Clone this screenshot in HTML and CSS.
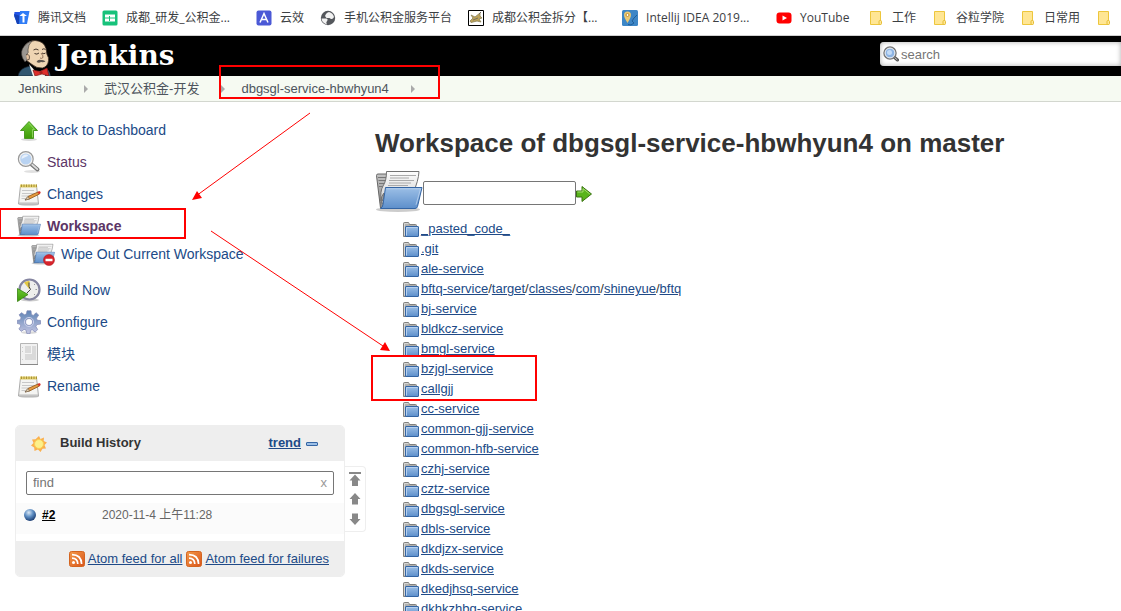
FILE: index.html
```html
<!DOCTYPE html>
<html lang="zh-CN">
<head>
<meta charset="utf-8">
<title>Workspace of dbgsgl-service-hbwhyun4 on master [Jenkins]</title>
<link rel="stylesheet" href="styles.css">
</head>
<body>
<svg class="sprite" aria-hidden="true">
  <defs>
    <linearGradient id="g-blue" x1="0" y1="0" x2="0" y2="1"><stop offset="0" stop-color="#9cbfe6"/><stop offset="1" stop-color="#5d8fcb"/></linearGradient>
    <linearGradient id="g-grey" x1="0" y1="0" x2="0" y2="1"><stop offset="0" stop-color="#c4c4c4"/><stop offset="1" stop-color="#8a8a8a"/></linearGradient>
    <linearGradient id="g-paper" x1="0" y1="0" x2="0" y2="1"><stop offset="0" stop-color="#fdfdfd"/><stop offset="1" stop-color="#cfcfcf"/></linearGradient>
    <linearGradient id="g-green" x1="0" y1="0" x2="0" y2="1"><stop offset="0" stop-color="#6cc935"/><stop offset="1" stop-color="#3e9a06"/></linearGradient>
    <linearGradient id="g-gear" x1="0" y1="0" x2="0" y2="1"><stop offset="0" stop-color="#5f84b5"/><stop offset="1" stop-color="#c3c5e2"/></linearGradient>
    <radialGradient id="g-ball" cx=".4" cy=".3" r=".7"><stop offset="0" stop-color="#dbe8f5"/><stop offset=".5" stop-color="#5f8fc4"/><stop offset="1" stop-color="#1d3f74"/></radialGradient>
    <linearGradient id="g-rss" x1="0" y1="0" x2="1" y2="1"><stop offset="0" stop-color="#f39a4a"/><stop offset="1" stop-color="#d9541a"/></linearGradient>
  </defs>
  <symbol id="i-folder" viewBox="0 0 16 16">
    <path d="M.5 14.500V1.500q0-1 1-1h4l1 2h6q1 0 1 1v11z" fill="#b0b0ae" stroke="#80807e"/>
    <path d="M1.500 13.500V1.500h4" fill="none" stroke="#d5d5d3"/>
    <rect x="2.500" y="4.500" width="13" height="10" rx=".5" fill="url(#g-blue)" stroke="#3465a4"/>
    <path d="M3.500 13.500v-8h11" fill="none" stroke="#b6d0ee"/>
  </symbol>
  <symbol id="i-open" viewBox="0 0 48 48">
    <ellipse cx="23" cy="42.500" rx="22" ry="2.500" fill="#000" opacity=".2"/>
    <path d="M1.500 8.500q0-1.500 1.500-1.500h12v34H5.500z" fill="url(#g-grey)" stroke="#666"/>
    <path d="M3 10.500h8M3.500 13.500h7M4 16.500h6M4 19.500h5" stroke="#777"/>
    <path d="M11.500 4.500h32.500Q43.500 14 38 26L32 36H6q4-5 3-10-3 3-3 8-1-10 2-15 3.500-5 3.500-14.500z" fill="url(#g-paper)" stroke="#727272"/>
    <path d="M15 8.500h26M15 11h19M14 13.500h25M14 16h22M13 18.500h20" stroke="#aaa"/>
    <path d="M10.500 20.500h36.500L42.500 39.500q-.5 2-2.500 2H5.500q2-1 2.500-4z" fill="url(#g-blue)" stroke="#3465a4" stroke-linejoin="round"/>
    <path d="M11.500 21.800h34l-4.500 16" fill="none" stroke="#bad2ef" opacity=".8"/>
  </symbol>
  <symbol id="i-up" viewBox="0 0 24 24">
    <ellipse cx="12" cy="21.500" rx="8" ry="1.500" fill="#000" opacity=".15"/>
    <path d="M12 3.500L20.500 12.500H16.500V20.500H7.500V12.500H3.500z" fill="url(#g-green)" stroke="#4a9a22"/>
    <path d="M12 5.200L17.500 11.500H15.500V19.500" fill="none" stroke="#a5e277" opacity=".7"/>
  </symbol>
  <symbol id="i-search" viewBox="0 0 24 24">
    <ellipse cx="15" cy="21.500" rx="8" ry="1.500" fill="#000" opacity=".12"/>
    <path d="M14 14l6.500 5.500" stroke="#777" stroke-width="4" stroke-linecap="round"/>
    <path d="M15 14.500l5.300 4.600" stroke="#ddd" stroke-width="1.800" stroke-linecap="round"/>
    <circle cx="8.800" cy="9" r="7" fill="#b9d3f2" stroke="#999" stroke-width="2"/>
    <circle cx="8.800" cy="9" r="6.200" fill="none" stroke="#f5f5f5" stroke-width="1.200"/>
    <path d="M4.500 9q0-4.500 5-4.500 3.500 1-1 2.500Q5.500 8.500 4.500 9z" fill="#e8f1fc"/>
  </symbol>
  <symbol id="i-find" viewBox="0 0 16 16">
    <path d="M11 11l3.500 3" stroke="#555" stroke-width="3" stroke-linecap="round"/>
    <path d="M11 11l3 2.600" stroke="#ccc" stroke-linecap="round"/>
    <circle cx="7" cy="7" r="6" fill="#8db4e4" stroke="#777" stroke-width="1.500"/>
    <circle cx="7" cy="7" r="4.900" fill="none" stroke="#f0f0f0"/>
    <circle cx="6.500" cy="6.500" r="2.500" fill="#c3dbf6"/>
  </symbol>
  <symbol id="i-note" viewBox="0 0 24 24">
    <ellipse cx="12" cy="22.500" rx="10" ry="1.300" fill="#000" opacity=".2"/>
    <path d="M3.500 3.500h16l2 18.500H1.500z" fill="#f4f4f2" stroke="#aaa"/>
    <path d="M2 21h19" stroke="#bbb"/>
    <path d="M3 2.500h17v3H3z" fill="#e2cf6b"/>
    <path d="M4.500 2.500v2.500M7 2.500v2.500M9.500 2.500v2.500M12 2.500v2.500M14.500 2.500v2.500M17 2.500v2.500M19.500 2.500v2.500" stroke="#a8923a"/>
    <path d="M5 8.500h12M5 11.500h13M4.500 14h9M4.500 16.500h4" stroke="#c8c8c8"/>
    <path d="M8 18l3-3.500 10-4.500 1.500 2L12.500 17z" fill="#e59a40" stroke="#8c5417" stroke-width=".8"/>
    <path d="M8 18l3-3.500 1.500 2.500z" fill="#ead2ad" stroke="#555" stroke-width=".5"/>
    <path d="M20.500 10.200l1.500-1.200q2 .5 1.700 2l-1.500 1.200z" fill="#d6332a"/>
  </symbol>
  <symbol id="i-build" viewBox="0 0 24 24">
    <ellipse cx="13" cy="22" rx="9" ry="1.500" fill="#000" opacity=".2"/>
    <circle cx="12.500" cy="11.500" r="10" fill="#eeeeec" stroke="#8585a0" stroke-width="2.200"/>
    <path d="M12.500 11.500L7 4.500q3-2 5.500-1.500z" fill="#e4c843"/>
    <path d="M12 4.500v4l1.500 3-3.500 3.500" fill="none" stroke="#444"/>
    <path d="M20 11.500h-1.500M18 6l-1 1M18 17l-1-1" stroke="#999"/>
    <path d="M.5 10.500l10.500 6-10.500 7z" fill="url(#g-green)" stroke="#378211" stroke-width=".8"/>
  </symbol>
  <symbol id="i-gear" viewBox="0 0 24 24">
    <ellipse cx="12" cy="22.500" rx="8" ry="1.300" fill="#000" opacity=".15"/>
    <path d="M10 .8h4l.4 3.700 2 .9 2.600-2.700 2.700 2.400-2.200 3.100.8 2.100 3.200.2v3.600l-3.700.5-.9 2 1.800 3-2.600 2.400-2.900-2.300-1.700.7-.4 3.300H9.900l-.8-3.500-2-.8-2.900 2-2.300-2.500L3.900 16l-.9-1.900-2.700-.6V10.300l2.900-.4.9-2.100-2-3 2.500-2.100 2.800 2.100 2-.8zM12 8.500a3.500 3.500 0 1 0 .1 0z" fill="url(#g-gear)" fill-rule="evenodd" stroke="#7f87b5" stroke-width=".7"/>
    <circle cx="12" cy="12" r="4.600" fill="none" stroke="#c9d0ea"/>
  </symbol>
  <symbol id="i-doc" viewBox="0 0 24 24">
    <path d="M3.500 1.500h17v21h-17z" fill="#f1f1f1" stroke="#b5b5b5"/>
    <path d="M3 22.500h18" stroke="#888"/>
    <path d="M8 4h11v14H8z" fill="#dadada"/>
    <path d="M8 11.500h6M14.500 4v8" stroke="#f4f4f4"/>
    <path d="M5.500 5v1M5.500 9v1M5.500 17v1" stroke="#ccc"/>
  </symbol>
  <symbol id="i-rss" viewBox="0 0 16 16">
    <rect x=".5" y=".5" width="15" height="15" rx="2" fill="url(#g-rss)" stroke="#d4641f"/>
    <circle cx="4.500" cy="11.500" r="1.500" fill="#fff"/>
    <path d="M3 7.200q5.500 0 5.800 5.800M3 3.600q9.300 0 9.600 9.400" fill="none" stroke="#fff" stroke-width="1.700"/>
  </symbol>
  <symbol id="i-mark" viewBox="0 0 16 16">
    <path d="M2.500 1.500h10v13h-10z" fill="#ffe694" stroke="#edc63c"/>
    <rect x="11" y="10.500" width="2.500" height="4" rx="1" fill="#ffe694" stroke="#e5bd35"/>
  </symbol>
  <symbol id="i-arrow" viewBox="0 0 16 16">
    <path d="M.5 5h5.500V.5L15.500 8 6 15.500V11H.5z" fill="#59b41c" stroke="#3a7411"/>
    <path d="M1.500 6h5.500V2.600L13.800 8" fill="none" stroke="#a4dc70"/>
  </symbol>
</svg>

<nav class="bookmarks" aria-label="Bookmarks">
  <a class="bookmark" href="#"><svg class="icon16" viewBox="0 0 16 16"><path d="M.5 2h8v11.500H3L0 6z" fill="#2254e8"/><path d="M0 4l5 1.500 1 8.500H3z" fill="#1642b5"/><path d="M6 1h9.500l-2.500 13H5z" fill="#2f7cf6"/><path d="M5.500 6l3.500-3 4 3h-2.500v6.500h-2V6z" fill="#fff"/></svg><span>腾讯文档</span></a>
  <a class="bookmark bookmark-long" href="#"><svg class="icon16" viewBox="0 0 16 16"><rect x=".5" y=".5" width="15" height="15" rx="1.500" fill="#17c27b"/><path d="M3 4.500h10v7H3z" fill="#fff"/><path d="M3 8h10M7.500 6v5" stroke="#17c27b"/></svg><span>成都_研发_公积金...</span></a>
  <a class="bookmark" href="#"><svg class="icon16" viewBox="0 0 16 16"><rect x=".5" y=".5" width="15" height="15" rx="2" fill="#4b59d6"/><path d="M4 12.500l4-9 4 9M5.500 9.500h5" fill="none" stroke="#fff" stroke-width="1.500"/></svg><span>云效</span></a>
  <a class="bookmark" href="#"><svg class="icon16" viewBox="0 0 16 16"><circle cx="8" cy="8" r="7.200" fill="#54575c"/><path d="M1.500 8.500h5q2 1 .5 2.500t0 3.500Q2 13 1.500 8.500zM6 4q1-1.500 3-2 4 1 5 5-1 2.500-3 2L9.500 8H6.500L5 6z" fill="#f2f2f2"/></svg><span>手机公积金服务平台</span></a>
  <a class="bookmark bookmark-long" href="#"><svg class="icon16" viewBox="0 0 16 16"><path d="M.5.500h15v15H.5z" fill="#fff" stroke="#000"/><path d="M2 11l3-3-2-3 4 2 5-4v3l2 2-3 1 2 3-4-1-6 1.500z" fill="#bda45c" stroke="#8c8158" stroke-width=".8"/><path d="M11 4l2-2M5 10l5-2" stroke="#777165"/></svg><span>成都公积金拆分【...</span></a>
  <a class="bookmark bookmark-long" href="#"><svg class="icon16" viewBox="0 0 16 16"><rect width="16" height="16" rx="1.500" fill="#3d86c6"/><path d="M6 14.500l3 .5 3-2-2-2 2-3 3-3" fill="none" stroke="#1f5d98"/><path d="M5.500 13Q2 7.500 2 5a3.500 3.500 0 0 1 7 0q0 2.500-3.500 8z" fill="#eac873"/><circle cx="5.500" cy="5" r="1.500" fill="#fff" stroke="#bd8f30"/></svg><span>Intellij IDEA 2019...</span></a>
  <a class="bookmark bookmark-mid" href="#"><svg class="icon16" viewBox="0 0 16 16"><rect x=".5" y="2.500" width="15" height="11" rx="3" fill="#f00"/><path d="M6.500 5.500v5L11 8z" fill="#fff"/></svg><span>YouTube</span></a>
  <a class="bookmark" href="#"><svg class="icon16"><use href="#i-mark"/></svg><span>工作</span></a>
  <a class="bookmark" href="#"><svg class="icon16"><use href="#i-mark"/></svg><span>谷粒学院</span></a>
  <a class="bookmark" href="#"><svg class="icon16"><use href="#i-mark"/></svg><span>日常用</span></a>
  <a class="bookmark" href="#" aria-label="More"><svg class="icon16"><use href="#i-mark"/></svg></a>
</nav>

<header class="header">
  <a class="logo" href="#">
    <svg class="butler" viewBox="0 0 36 38">
      <path d="M0 38q1-6 7-8.500l5-1.500 10 10z" fill="#31566f" stroke="#16232f" stroke-width=".7"/>
      <path d="M29 31q3 2 3.500 7H27z" fill="#31566f"/>
      <path d="M11 26l7 8 9-2v6H15z" fill="#f4f1ec"/>
      <path d="M5 16Q5 3 17 2.500q9 .5 11 8 .5 3 1 6 2 3 1.500 6-.5 6-6 7.500-6 .5-10.500-3.500L8 22Q5 20 5 16z" fill="#efd5b3" stroke="#3b2c22" stroke-width=".8"/>
      <path d="M4.500 20Q2 13 6 8.500 9 4 14 3 10 7 10 12q1 3-1.500 4.500L9 22 7 24z" fill="#9b9690" stroke="#3e3935" stroke-width=".6"/>
      <path d="M8 17q3-1.500 3.500 2t-2.500 3" fill="#e6c3a0" stroke="#3b2c24" stroke-width=".7"/>
      <path d="M15.500 12q2.500-2 5 0M24 11.500q2-1.500 3.500 0M16.500 15.500q2.500 1.500 4.500-.5M24 15q2 1.500 3.500 0" fill="none" stroke="#33261e" stroke-width=".9"/>
      <path d="M23 15q2.500 3 2 4.500-1.500 1.500-3 .5" fill="none" stroke="#7b5b45" stroke-width=".8"/>
      <path d="M18.500 24q1.500-3 4.500-2 3-.5 4.500 1.500-2 1-4.500.5-2 1.500-4.500 0z" fill="#5c534c"/>
      <path d="M15 32l7 1.500 7-3.500 2 8-7-2-7 2z" fill="#de2f2b" stroke="#7c1a18" stroke-width=".7"/>
      <circle cx="23" cy="34.500" r="1.600" fill="#a51f1c"/>
    </svg>
    <span class="logo-text">Jenkins</span>
  </a>
  <label class="search"><svg class="search-icon" role="img" aria-label="Search"><use href="#i-find"/></svg><input type="text" placeholder="search"></label>
</header>

<nav class="crumbs" aria-label="Breadcrumb">
  <a href="#">Jenkins</a><i class="tri"></i><a href="#">武汉公积金-开发</a><i class="tri"></i><a href="#">dbgsgl-service-hbwhyun4</a><i class="tri"></i>
</nav>

<div class="page">
  <aside class="side">
    <ul class="tasks">
      <li><a class="task" href="#"><svg><use href="#i-up"/></svg>Back to Dashboard</a></li>
      <li><a class="task visited" href="#"><svg><use href="#i-search"/></svg>Status</a></li>
      <li><a class="task" href="#"><svg><use href="#i-note"/></svg>Changes</a></li>
      <li><a class="task visited current" href="#"><svg><use href="#i-open"/></svg>Workspace</a>
        <ul class="subtasks">
          <li><a class="task" href="#"><svg viewBox="0 0 48 48"><use href="#i-open" width="48" height="48"/><circle cx="36" cy="36" r="11" fill="#d8242c" stroke="#a91519"/><path d="M29 36h14" stroke="#fff" stroke-width="5"/></svg>Wipe Out Current Workspace</a></li>
        </ul>
      </li>
      <li><a class="task" href="#"><svg><use href="#i-build"/></svg>Build Now</a></li>
      <li><a class="task" href="#"><svg><use href="#i-gear"/></svg>Configure</a></li>
      <li><a class="task" href="#"><svg><use href="#i-doc"/></svg>模块</a></li>
      <li><a class="task" href="#"><svg><use href="#i-note"/></svg>Rename</a></li>
    </ul>

    <div class="history-wrap">
      <section class="history">
        <div class="history-head">
          <svg class="icon16" viewBox="0 0 16 16"><path d="M8 0l1.500 3L13 1.500 12.700 5 16 6.500 13.500 9l1.500 3.500-3.500.3L9.500 16 7 13.500 3.500 15l-.3-3.500L0 9.500 2.500 7 1 3.500 4.500 3.300z" fill="#fbb04d"/><circle cx="8" cy="8" r="4.500" fill="#fdf08a" stroke="#f9cf55"/></svg>
          <h2>Build History</h2>
          <a href="#" class="trend">trend</a>
          <button class="collapse" type="button" aria-label="Collapse"></button>
        </div>
        <div class="find"><input type="text" placeholder="find" aria-label="find"><button type="button" aria-label="Clear">x</button></div>
        <div class="build">
          <svg class="ball" viewBox="0 0 14 14"><circle cx="7" cy="7" r="6" fill="url(#g-ball)"/></svg>
          <a class="build-id" href="#">#2</a>
          <a class="build-date" href="#">2020-11-4 上午11:28</a>
        </div>
        <div class="feeds">
          <a href="#"><svg class="icon16"><use href="#i-rss"/></svg><span>Atom feed for all</span></a>
          <a href="#"><svg class="icon16"><use href="#i-rss"/></svg><span>Atom feed for failures</span></a>
        </div>
      </section>
      <div class="pager">
        <button type="button" aria-label="Newest"><svg viewBox="0 0 12 14"><path d="M0 0h12v2H0zM6 2.500L11.500 8.500H9V14H3V8.500H.5z"/></svg></button>
        <button type="button" aria-label="Newer"><svg viewBox="0 0 12 14"><path d="M6 1l5.500 6H9v5.500H3V7H.5z"/></svg></button>
        <button type="button" aria-label="Older"><svg viewBox="0 0 12 14"><path d="M6 13l5.500-6H9V1.500H3V7H.5z"/></svg></button>
      </div>
    </div>
  </aside>

  <main class="main">
    <h1>Workspace of dbgsgl-service-hbwhyun4 on master</h1>
    <form class="path">
      <svg class="icon48"><use href="#i-open"/></svg><input type="text" aria-label="Path"><button type="button" aria-label="Go"><svg class="icon16"><use href="#i-arrow"/></svg></button>
    </form>
    <ul class="files">
      <li><svg class="icon16"><use href="#i-folder"/></svg><a href="#">_pasted_code_</a></li>
      <li><svg class="icon16"><use href="#i-folder"/></svg><a href="#">.git</a></li>
      <li><svg class="icon16"><use href="#i-folder"/></svg><a href="#">ale-service</a></li>
      <li><svg class="icon16"><use href="#i-folder"/></svg><span><a href="#">bftq-service</a>/<a href="#">target</a>/<a href="#">classes</a>/<a href="#">com</a>/<a href="#">shineyue</a>/<a href="#">bftq</a></span></li>
      <li><svg class="icon16"><use href="#i-folder"/></svg><a href="#">bj-service</a></li>
      <li><svg class="icon16"><use href="#i-folder"/></svg><a href="#">bldkcz-service</a></li>
      <li><svg class="icon16"><use href="#i-folder"/></svg><a href="#">bmgl-service</a></li>
      <li><svg class="icon16"><use href="#i-folder"/></svg><a href="#">bzjgl-service</a></li>
      <li><svg class="icon16"><use href="#i-folder"/></svg><a href="#">callgjj</a></li>
      <li><svg class="icon16"><use href="#i-folder"/></svg><a href="#">cc-service</a></li>
      <li><svg class="icon16"><use href="#i-folder"/></svg><a href="#">common-gjj-service</a></li>
      <li><svg class="icon16"><use href="#i-folder"/></svg><a href="#">common-hfb-service</a></li>
      <li><svg class="icon16"><use href="#i-folder"/></svg><a href="#">czhj-service</a></li>
      <li><svg class="icon16"><use href="#i-folder"/></svg><a href="#">cztz-service</a></li>
      <li><svg class="icon16"><use href="#i-folder"/></svg><a href="#">dbgsgl-service</a></li>
      <li><svg class="icon16"><use href="#i-folder"/></svg><a href="#">dbls-service</a></li>
      <li><svg class="icon16"><use href="#i-folder"/></svg><a href="#">dkdjzx-service</a></li>
      <li><svg class="icon16"><use href="#i-folder"/></svg><a href="#">dkds-service</a></li>
      <li><svg class="icon16"><use href="#i-folder"/></svg><a href="#">dkedjhsq-service</a></li>
      <li><svg class="icon16"><use href="#i-folder"/></svg><a href="#">dkhkzhbg-service</a></li>
    </ul>
  </main>
</div>

<svg class="notes" aria-hidden="true">
  <g fill="none" stroke="#f00" stroke-width="2">
    <rect x="220" y="66" width="219" height="32"/>
    <rect x="0" y="209" width="185" height="29"/>
    <rect x="372" y="356" width="164" height="44"/>
  </g>
  <path d="M310 113L196 196M211 231L386 348" fill="none" stroke="#f00"/>
  <path d="M192 200l5-9 5 7zM390 351l-5-9-5 8z" fill="#f00"/>
</svg>
</body>
</html>
```

FILE: styles.css
```css
* { box-sizing: border-box; }

body {
  margin: 0;
  height: 100vh;
  overflow: hidden;
  position: relative;
  background: #fff;
  color: #333;
  font: 13px/20px "Liberation Sans", "Noto Sans CJK SC", sans-serif;
}

a { color: #204a87; }
ul { list-style: none; margin: 0; padding: 0; }
button { background: none; border: 0; padding: 0; font: inherit; }
svg { flex: none; display: block; }

.sprite { position: absolute; width: 0; height: 0; }
.icon16 { width: 16px; height: 16px; }
.icon48 { width: 48px; height: 48px; }

.bookmarks {
  display: flex;
  align-items: center;
  gap: 16px;
  height: 36px;
  padding-left: 14px;
  border-bottom: 1px solid #d0d0d0;
  overflow: hidden;
  font: 12px/20px "Open Sans", "Noto Sans CJK SC", sans-serif;
}
.bookmark {
  display: flex;
  flex: none;
  align-items: center;
  gap: 8px;
  color: #3c4043;
  text-decoration: none;
  white-space: nowrap;
}
.bookmark-long { width: 138px; }
.bookmark-mid { width: 76px; }

.header {
  display: flex;
  justify-content: space-between;
  height: 40px;
  background: #000;
}
.logo {
  display: flex;
  align-items: center;
  padding-left: 18px;
  color: #fff;
  text-decoration: none;
}
.butler { width: 36px; height: 38px; margin-top: 2px; }
.logo-text { padding-left: 3px; font: bold 28px/40px "DejaVu Serif", serif; }
.search {
  display: flex;
  align-items: center;
  width: 241px;
  height: 24px;
  margin-top: 6px;
  padding-left: 3px;
  border-radius: 4px 0 0 4px;
  background: #fff;
  box-shadow: inset 0 0 5px #aaa;
}
.search-icon { width: 16px; height: 16px; }
.search input {
  flex: 1;
  min-width: 0;
  padding: 2px 0 0 2px;
  border: 0;
  outline: 0;
  background: none;
  font: inherit;
}
::placeholder { color: #757575; }

.crumbs {
  display: flex;
  align-items: center;
  height: 26px;
  padding-left: 18px;
  background: #f6faf2;
  border-bottom: 1px solid #d3d7cf;
}
.crumbs a { color: #4d545d; text-decoration: none; }
.tri {
  margin: 1px 16px 0 22px;
  border: solid transparent;
  border-width: 4px 0 4px 4px;
  border-left-color: #aaa;
}

.page { display: flex; }
.side { flex: none; width: 375px; padding: 12px 0 0 15px; }

.tasks { padding-left: 2px; font-size: 14px; }
.task {
  display: flex;
  align-items: center;
  gap: 6px;
  height: 32px;
  color: #204a87;
  text-decoration: none;
}
.task svg { width: 24px; height: 24px; }
.visited { color: #5c3566; }
.current { font-weight: bold; }
.subtasks { padding: 0 0 8px 14px; }
.subtasks .task { height: 24px; }

.history-wrap { display: flex; align-items: flex-start; margin-top: 23px; }
.history {
  width: 330px;
  border: 1px solid #eee;
  border-radius: 5px;
  overflow: hidden;
}
.history-head {
  display: flex;
  align-items: center;
  height: 35px;
  padding: 0 26px 2px 15px;
  background: #eee;
}
.history-head h2 { margin: 0 auto 0 13px; font-size: 13px; line-height: 20px; }
.history-head .icon16 { margin-top: 2px; }
.trend { font-weight: bold; }
.collapse {
  width: 12px;
  height: 4px;
  margin: 2px 0 0 5px;
  border: 1px solid #3465a4;
  border-radius: 1px;
  background: #9cbfe6;
}
.find {
  display: flex;
  align-items: center;
  height: 24px;
  margin: 10px;
  margin-bottom: 8px;
  padding: 0 6px;
  border: 1px solid #767676;
  border-radius: 2px;
}
.find input { flex: 1; min-width: 0; padding: 0; border: 0; outline: 0; font: inherit; }
.find button { color: #999; line-height: 20px; }
.build {
  display: flex;
  align-items: center;
  height: 31px;
  margin-bottom: 7px;
  padding: 0 0 8px 7px;
  background: #fbfbfb;
}
.ball { width: 14px; height: 14px; }
.build-id { width: 60px; margin-left: 5px; color: #000; font-size: 12px; font-weight: bold; }
.build-date { color: #666; font-size: 12px; text-decoration: none; }
.feeds {
  display: flex;
  justify-content: flex-end;
  gap: 4px;
  padding: 8px 15px 7px;
  background: #eee;
}
.feeds a { display: flex; align-items: center; gap: 3px; }
.pager {
  display: flex;
  flex-direction: column;
  gap: 6px;
  margin-top: 41px;
  padding: 5px 4px;
  border: 1px solid #eee;
  border-left: 0;
  border-radius: 0 4px 4px 0;
}
.pager svg { width: 12px; height: 14px; fill: #888; }

.main { flex: 1; min-width: 0; padding-top: 25px; }
h1 { margin: 0; font-size: 26px; line-height: 32px; }
.path { display: flex; align-items: center; margin: 8px 0 4px; }
.path input {
  width: 153px;
  height: 24px;
  margin-top: 4px;
  border: 1px solid #767676;
  border-radius: 2px;
}
.path button { margin-top: 5px; }
.files { padding-left: 28px; }
.files li { display: flex; align-items: center; gap: 2px; height: 20px; }
.files svg { margin-top: 2px; }

.notes {
  position: absolute;
  top: 0;
  left: 0;
  width: 100%;
  height: 100%;
  pointer-events: none;
}
```
